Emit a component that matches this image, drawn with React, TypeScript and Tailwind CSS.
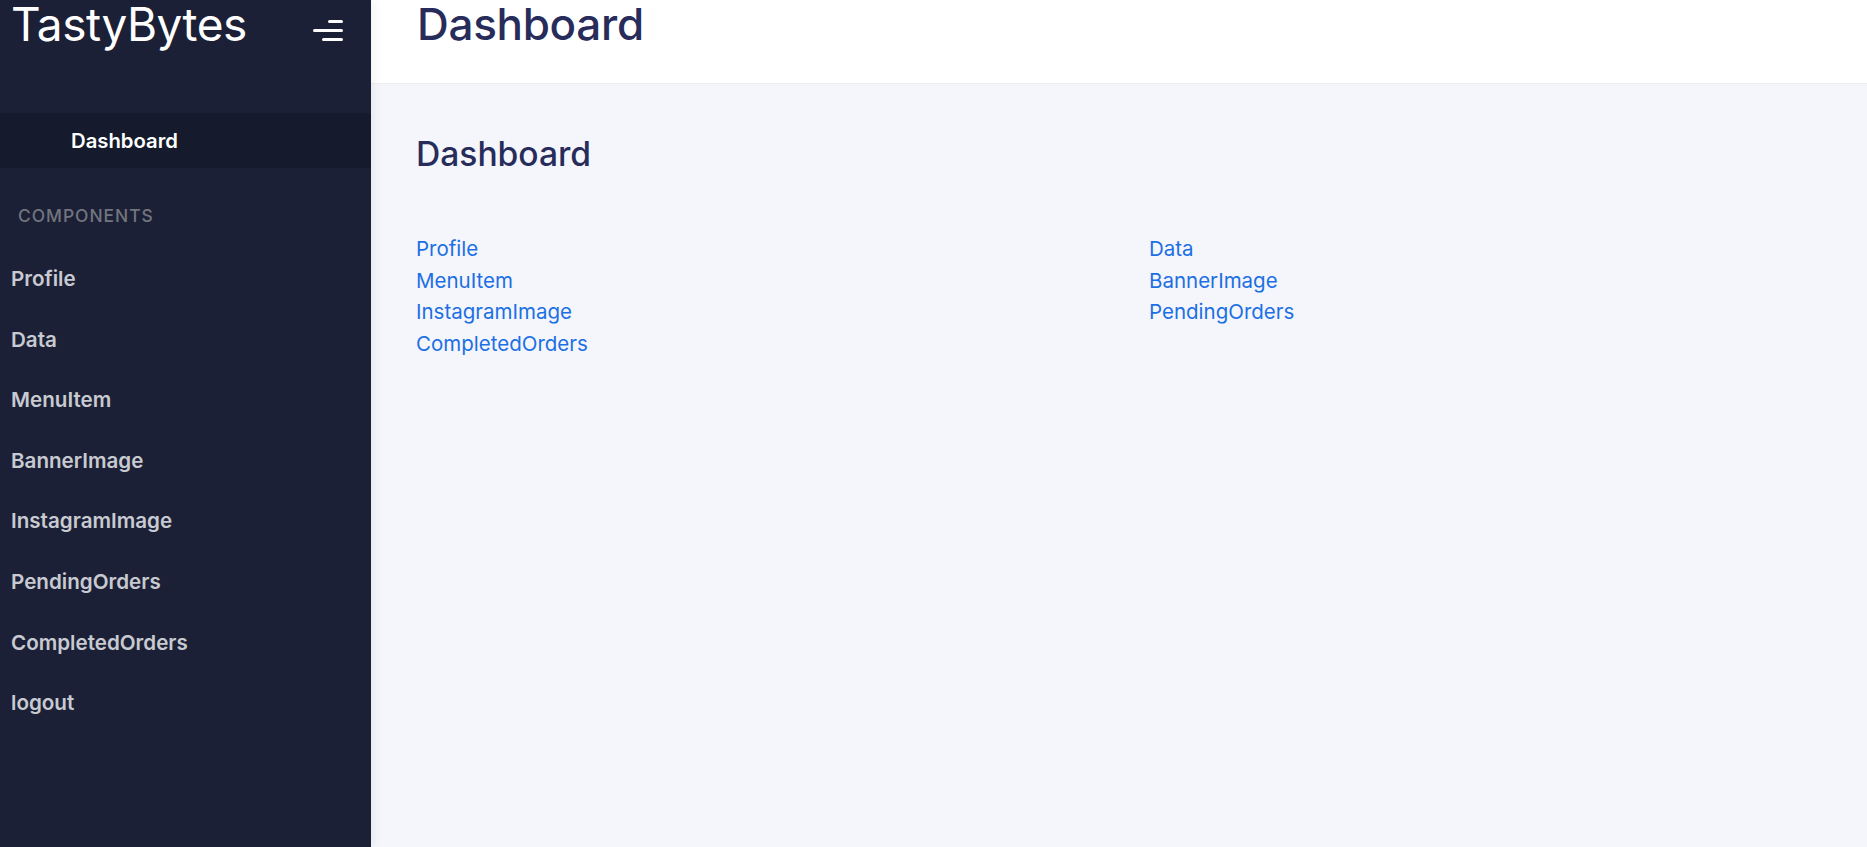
import React from "react";

const sideItems = [
  "Profile",
  "Data",
  "MenuItem",
  "BannerImage",
  "InstagramImage",
  "PendingOrders",
  "CompletedOrders",
  "logout",
];

const colA = ["Profile", "MenuItem", "InstagramImage", "CompletedOrders"];
const colB = ["Data", "BannerImage", "PendingOrders"];

export default function App() {
  return (
    <div
      className="flex h-[847px] w-full overflow-hidden"
      style={{ fontFamily: "Inter, 'Noto Sans', Roboto, sans-serif" }}
    >
      <aside className="relative z-10 flex w-[371px] shrink-0 flex-col bg-[#1b2036] shadow-[3px_0_10px_rgba(0,0,0,0.06)]">
        <div className="flex h-[113px] items-start justify-between pl-[11px] pr-[28px]">
          <span className="pt-[1px] text-[46px] leading-[46px] font-normal tracking-[-0.5px] text-white">
            TastyBytes
          </span>
          <button className="mt-[20px] flex w-[30px] flex-col items-end gap-[6px]">
            <span className="block h-[3px] w-[15px] rounded-full bg-white" />
            <span className="block h-[3px] w-[30px] rounded-full bg-white" />
            <span className="block h-[3px] w-[21px] rounded-full bg-white" />
          </button>
        </div>
        <div className="flex h-[55px] items-center bg-[#151b2c] pl-[71px] pt-[2px] text-[20.3px] font-semibold text-white">
          Dashboard
        </div>
        <div className="pt-[38px] pl-[18px] text-[17.4px] leading-[20px] font-medium tracking-[1px] text-[#72757e]">
          COMPONENTS
        </div>
        <nav className="flex flex-col pt-[41px]">
          {sideItems.map((s) => (
            <a
              key={s}
              className="flex h-[60.6px] items-start pl-[11px] text-[20.6px] leading-[24px] font-semibold text-[#c8cad1]"
            >
              {s}
            </a>
          ))}
        </nav>
      </aside>
      <main className="flex min-w-0 flex-1 flex-col bg-[#f5f6fb]">
        <header className="flex h-[84px] items-start border-b border-[#ebedf2] bg-white pl-[46px]">
          <h1 className="pt-[1px] text-[44px] leading-[46px] font-medium tracking-[-0.3px] text-[#272c5a]">
            Dashboard
          </h1>
        </header>
        <section className="px-[45px] pt-[50px]">
          <h2 className="text-[33.6px] leading-[40px] font-medium text-[#272c5a]">
            Dashboard
          </h2>
          <div className="mt-[59px] grid grid-cols-[733px_1fr]">
            <div className="flex flex-col">
              {colA.map((s) => (
                <a key={s} className="text-[20.5px] leading-[31.7px] text-[#1c6fe4]">
                  {s}
                </a>
              ))}
            </div>
            <div className="flex flex-col">
              {colB.map((s) => (
                <a key={s} className="text-[20.5px] leading-[31.7px] text-[#1c6fe4]">
                  {s}
                </a>
              ))}
            </div>
          </div>
        </section>
      </main>
    </div>
  );
}
